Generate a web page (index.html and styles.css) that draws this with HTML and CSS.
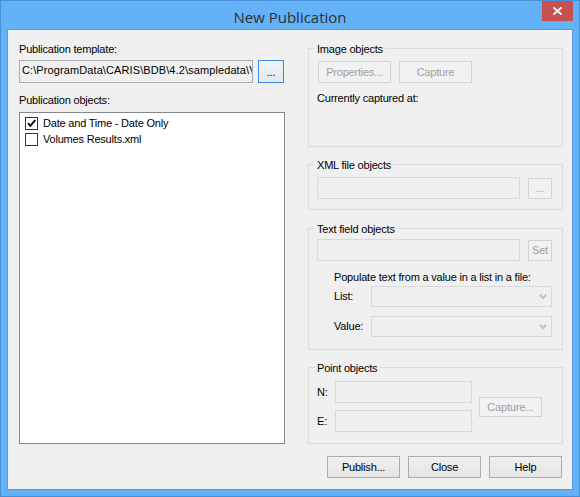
FILE: index.html
```html
<!DOCTYPE html>
<html>
<head>
<meta charset="utf-8">
<title>New Publication</title>
<link rel="stylesheet" href="styles.css">
</head>
<body>
<div class="window">
  <div class="titlebar">
    <div class="title">New Publication</div>
    <button class="close" aria-label="Close">
      <svg width="9" height="8" viewBox="0 0 9 8"><path d="M0.5 0.5 L8.5 7.5 M8.5 0.5 L0.5 7.5" stroke="#fff" stroke-width="1.8" fill="none"/></svg>
    </button>
  </div>
  <div class="client">
    <div class="main">
      <div class="left">
        <div class="label">Publication template:</div>
        <div class="tpl-row">
          <div class="field readonly tpl-field"><span class="tpl-text">C:\ProgramData\CARIS\BDB\4.2\sampledata\V</span></div>
          <button class="btn default browse">...</button>
        </div>
        <div class="label objects-label">Publication objects:</div>
        <div class="listbox">
          <div class="item">
            <span class="check"><svg width="11" height="11" viewBox="0 0 11 11"><path d="M2 5.2 L4.4 7.8 L9.2 2.2" stroke="#000" stroke-width="1.9" fill="none"/></svg></span>
            <span>Date and Time - Date Only</span>
          </div>
          <div class="item">
            <span class="check"></span>
            <span>Volumes Results.xml</span>
          </div>
        </div>
      </div>
      <div class="right">
        <div class="group g-image">
          <div class="group-title">Image objects</div>
          <div class="btn-row">
            <button class="btn disabled w73">Properties...</button>
            <button class="btn disabled w73">Capture</button>
          </div>
          <div class="captured">Currently captured at:</div>
        </div>
        <div class="group g-xml">
          <div class="group-title">XML file objects</div>
          <div class="field-row">
            <div class="field disabled wide"></div>
            <button class="btn disabled small">...</button>
          </div>
        </div>
        <div class="group g-text">
          <div class="group-title">Text field objects</div>
          <div class="field-row">
            <div class="field disabled wide"></div>
            <button class="btn disabled small">Set</button>
          </div>
          <div class="populate">Populate text from a value in a list in a file:</div>
          <div class="combo-row list-row">
            <span class="combo-label">List:</span>
            <div class="combo">
              <svg width="8" height="6" viewBox="0 0 8 6"><path d="M0.8 0.8 L4 4.2 L7.2 0.8" stroke="#c2c2c2" stroke-width="2" fill="none"/></svg>
            </div>
          </div>
          <div class="combo-row value-row">
            <span class="combo-label">Value:</span>
            <div class="combo">
              <svg width="8" height="6" viewBox="0 0 8 6"><path d="M0.8 0.8 L4 4.2 L7.2 0.8" stroke="#c2c2c2" stroke-width="2" fill="none"/></svg>
            </div>
          </div>
        </div>
        <div class="group g-point">
          <div class="group-title">Point objects</div>
          <div class="point">
            <div class="coords">
              <div class="coord-row"><span class="coord-label">N:</span><div class="field disabled coord"></div></div>
              <div class="coord-row e-row"><span class="coord-label">E:</span><div class="field disabled coord"></div></div>
            </div>
            <button class="btn disabled capture">Capture...</button>
          </div>
        </div>
      </div>
    </div>
    <div class="footer">
      <button class="btn w73">Publish...</button>
      <button class="btn w73">Close</button>
      <button class="btn w73">Help</button>
    </div>
  </div>
</div>
</body>
</html>
```

FILE: styles.css
```css
* { box-sizing: border-box; }

body {
  margin: 0;
  font-family: "Liberation Sans", Arial, sans-serif;
  font-size: 11px;
  line-height: 13px;
  color: #000;
  letter-spacing: -0.2px;
}

.window {
  width: 580px;
  height: 497px;
  background: #63b2f8;
  border: 1px solid #4a8fd6;
  display: flex;
  flex-direction: column;
}

.titlebar {
  height: 28px;
  display: grid;
  grid-template-columns: 1fr auto 1fr;
  align-items: start;
}

.title {
  grid-column: 2;
  font-family: "Open Sans", "Noto Sans", sans-serif;
  font-size: 15px;
  line-height: 20px;
  padding-top: 6px;
  color: #2f2f2f;
  letter-spacing: 0;
}

.close {
  grid-column: 3;
  justify-self: end;
  margin-right: 6px;
  width: 31px;
  height: 20px;
  padding: 0;
  border: 0;
  background: #c75050;
  display: flex;
  align-items: center;
  justify-content: center;
}

.client {
  margin: 0 6px 6px;
  height: 461px;
  background: #f0f0f0;
  border: 1px solid #559be2;
  padding: 13px 9px 0 11px;
  display: flex;
  flex-direction: column;
}

.main {
  display: flex;
  gap: 23px;
}

.left {
  width: 266px;
  display: flex;
  flex-direction: column;
}

.right {
  width: 255px;
  display: flex;
  flex-direction: column;
}

/* controls */
.btn {
  font-family: inherit;
  font-size: 11px;
  letter-spacing: -0.2px;
  line-height: 18px;
  height: 22px;
  padding: 0;
  color: #000;
  border: 1px solid #acacac;
  background: linear-gradient(#f0f0f0, #e5e5e5);
  border-radius: 0;
}

.btn.default {
  border-color: #3d8ee2;
  background: linear-gradient(#eef3f8, #e3e9ef);
}

.btn.disabled {
  color: #a0a0a0;
  border-color: #d3d3d3;
  background: #f2f2f2;
}

.w73 { width: 73px; }

.field {
  height: 22px;
  border: 1px solid #d9d9d9;
  background: #f0f0f0;
}

.field.readonly {
  border-color: #abadb3;
}

.label { white-space: nowrap; }

.tpl-row {
  display: flex;
  gap: 5px;
  margin-top: 4px;
}

.tpl-field {
  width: 234px;
  height: 23px;
  padding: 0 0 0 2px;
  line-height: 19px;
  white-space: nowrap;
  overflow: hidden;
}

.tpl-text {
  letter-spacing: 0.1px;
}

.browse {
  width: 26px;
  height: 23px;
}

.objects-label { margin-top: 11px; }

.listbox {
  margin-top: 5px;
  height: 332px;
  border: 1px solid #828790;
  background: #fff;
  padding-top: 2px;
}

.item {
  display: flex;
  align-items: center;
  height: 16px;
  line-height: 16px;
  padding-left: 5px;
  gap: 5px;
  white-space: nowrap;
}

.check {
  width: 13px;
  height: 13px;
  border: 1px solid #333;
  background: #fff;
  display: flex;
  align-items: center;
  justify-content: center;
  flex: none;
}

/* group boxes */
.group {
  border: 1px solid #dcdcdc;
  padding: 0 10px 0 8px;
}

.group-title {
  width: max-content;
  margin: -6px 0 0 -2px;
  padding: 0 2px;
  background: #f0f0f0;
  line-height: 13px;
}

.g-image { margin-top: 5px; padding-bottom: 41px; }
.g-xml { margin-top: 17px; padding-bottom: 10px; }
.g-text { margin-top: 18px; padding-bottom: 12px; }
.g-point { margin-top: 17px; padding-bottom: 11px; }

.btn-row {
  display: flex;
  gap: 8px;
  margin-top: 5px;
  margin-left: 1px;
}

.captured { margin-top: 9px; }

.field-row {
  display: flex;
  align-items: center;
  gap: 8px;
}

.g-xml .field-row { margin-top: 5px; }
.g-text .field-row { margin-top: 3px; }

.wide { width: 203px; }

.small {
  width: 24px;
  height: 21px;
  line-height: 17px;
}

.populate {
  margin-top: 10px;
  padding-left: 17px;
}

.combo-row {
  display: flex;
  align-items: center;
  padding-left: 17px;
}

.list-row { margin-top: 2px; }
.value-row { margin-top: 9px; }

.combo-label { width: 37px; }

.combo {
  width: 181px;
  height: 21px;
  border: 1px solid #d9d9d9;
  background: #f0f0f0;
  display: flex;
  align-items: center;
  justify-content: flex-end;
  padding-right: 4px;
}

.point {
  display: flex;
  align-items: center;
  gap: 7px;
  margin-top: 6px;
}

.coords {
  display: flex;
  flex-direction: column;
  gap: 7px;
}

.coord-row {
  display: flex;
  align-items: center;
}

.coord-label { width: 18px; }

.coord { width: 137px; }

.capture {
  width: 63px;
  height: 20px;
  line-height: 16px;
}

.footer {
  display: flex;
  justify-content: flex-end;
  gap: 8px;
  margin-top: 12px;
  padding-right: 1px;
}
```
